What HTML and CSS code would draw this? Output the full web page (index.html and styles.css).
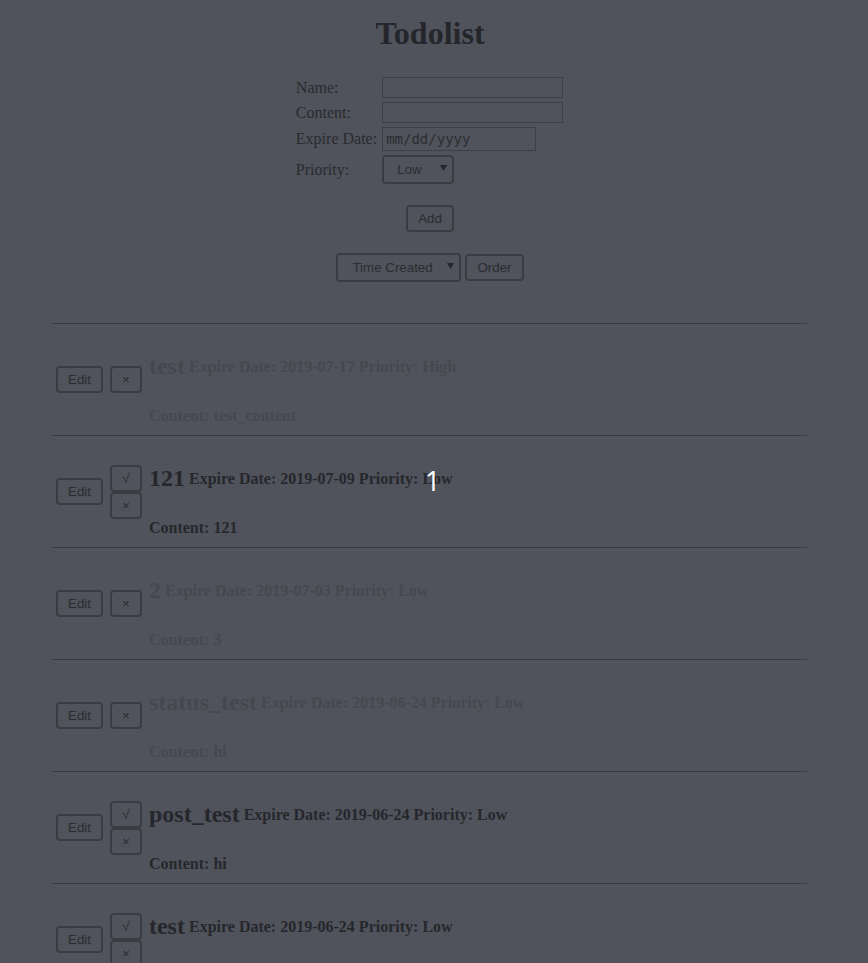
FILE: index.html
```html
<!DOCTYPE html>
<html>
<head>
<meta charset="utf-8">
<title>Todolist</title>
<link rel="stylesheet" href="styles.css">
</head>
<body>
<div class="page">
  <h1 class="title">Todolist</h1>
  <table class="form">
    <tr><td class="label">Name:</td><td><input class="text-input" type="text"></td></tr>
    <tr><td class="label">Content:</td><td><input class="text-input" type="text"></td></tr>
    <tr><td class="label">Expire Date:</td><td><input class="date-input" type="text" placeholder="mm/dd/yyyy"></td></tr>
    <tr><td class="label">Priority:</td><td>
      <span class="select-wrap">
        <select class="select select-priority"><option>Low</option><option>Medium</option><option>High</option></select>
        <svg class="arrow" width="7" height="6" viewBox="0 0 7 6"><path d="M0 0H7L3.5 6Z"/></svg>
      </span>
    </td></tr>
  </table>
  <div class="add-row"><button class="btn">Add</button></div>
  <div class="sort-row">
    <span class="select-wrap">
      <select class="select select-sort"><option>Time Created</option><option>Expire Date</option><option>Priority</option></select>
      <svg class="arrow" width="7" height="6" viewBox="0 0 7 6"><path d="M0 0H7L3.5 6Z"/></svg>
    </span>
    <button class="btn">Order</button>
  </div>

  <div class="list">
    <div class="item done">
      <button class="btn">Edit</button>
      <div class="stack"><button class="btn btn-sq">×</button></div>
      <div class="info">
        <div class="head"><span class="name">test</span> <span class="meta">Expire Date: 2019-07-17 Priority: High</span></div>
        <p class="content">Content: test_content</p>
      </div>
    </div>
    <div class="item">
      <button class="btn">Edit</button>
      <div class="stack"><button class="btn btn-sq">√</button><button class="btn btn-sq">×</button></div>
      <div class="info">
        <div class="head"><span class="name">121</span> <span class="meta">Expire Date: 2019-07-09 Priority: Low</span></div>
        <p class="content">Content: 121</p>
      </div>
    </div>
    <div class="item done">
      <button class="btn">Edit</button>
      <div class="stack"><button class="btn btn-sq">×</button></div>
      <div class="info">
        <div class="head"><span class="name">2</span> <span class="meta">Expire Date: 2019-07-03 Priority: Low</span></div>
        <p class="content">Content: 3</p>
      </div>
    </div>
    <div class="item done">
      <button class="btn">Edit</button>
      <div class="stack"><button class="btn btn-sq">×</button></div>
      <div class="info">
        <div class="head"><span class="name">status_test</span> <span class="meta">Expire Date: 2019-06-24 Priority: Low</span></div>
        <p class="content">Content: hi</p>
      </div>
    </div>
    <div class="item">
      <button class="btn">Edit</button>
      <div class="stack"><button class="btn btn-sq">√</button><button class="btn btn-sq">×</button></div>
      <div class="info">
        <div class="head"><span class="name">post_test</span> <span class="meta">Expire Date: 2019-06-24 Priority: Low</span></div>
        <p class="content">Content: hi</p>
      </div>
    </div>
    <div class="item">
      <button class="btn">Edit</button>
      <div class="stack"><button class="btn btn-sq">√</button><button class="btn btn-sq">×</button></div>
      <div class="info">
        <div class="head"><span class="name">test</span> <span class="meta">Expire Date: 2019-06-24 Priority: Low</span></div>
        <p class="content">Content: hi</p>
      </div>
    </div>
  </div>
</div>
<span class="marker">1</span>
</body>
</html>
```

FILE: styles.css
```css
html {
  background: #50535b;
}
body {
  margin: 0;
  overflow: hidden;
  background: #50535b;
  color: #26272c;
  font-family: "Liberation Serif", "Times New Roman", serif;
  font-size: 16px;
}
.page {
  width: 844px;
  margin-left: 8px;
  padding-top: 15px;
}
.title {
  margin: 0;
  text-align: center;
  font-size: 32px;
  font-weight: bold;
  color: #25262b;
}
.form {
  margin: 22px auto 0;
  border-spacing: 2px;
}
.form td {
  padding: 1px;
  vertical-align: middle;
}
.form td.label {
  padding: 1px 2px 1px 0;
  color: #2a2b30;
  white-space: nowrap;
}
.text-input {
  display: block;
  box-sizing: border-box;
  width: 181px;
  height: 21px;
  margin: 0;
  border: 1px solid #3c3e45;
  background: transparent;
  padding: 1px 2px;
}
.date-input {
  display: block;
  box-sizing: border-box;
  width: 154px;
  height: 24px;
  margin: 0;
  border: 1px solid #3c3e45;
  background: transparent;
  padding: 0 3px;
  font-family: "DejaVu Sans Mono", "Liberation Mono", monospace;
  font-size: 14px;
  color: #2c2d32;
}
.date-input::placeholder {
  color: #2c2d32;
  opacity: 1;
}
.select-wrap {
  position: relative;
  display: inline-flex;
}
.select {
  -webkit-appearance: none;
  appearance: none;
  box-sizing: border-box;
  height: 29px;
  margin: 0;
  border: 2px solid #3a3c42;
  border-radius: 4px;
  background: transparent;
  color: #2c2d32;
  font-family: "Liberation Sans", Arial, sans-serif;
  font-size: 13.333px;
  padding: 0 20px 0 13px;
}
.select-priority {
  width: 72px;
}
.select-sort {
  width: 125px;
  padding-left: 14px;
}
.arrow {
  position: absolute;
  right: 7px;
  top: 10px;
  fill: #25262b;
  pointer-events: none;
}
.btn {
  box-sizing: border-box;
  height: 27px;
  min-width: 32px;
  margin: 0;
  padding: 0 10px;
  border: 2px solid #3a3c42;
  border-radius: 4px;
  background: transparent;
  color: #2a2b30;
  font-family: "Liberation Sans", Arial, sans-serif;
  font-size: 13.333px;
}
.add-row {
  display: flex;
  justify-content: center;
  margin-top: 18px;
}
.sort-row {
  display: flex;
  justify-content: center;
  align-items: center;
  gap: 4px;
  margin-top: 21px;
}
.list {
  margin: 41px 45px 0 44px;
  border-top: 1px solid #3a3c42;
}
.item {
  display: flex;
  align-items: center;
  gap: 7px;
  padding-left: 4px;
  border-bottom: 1px solid #3a3c42;
}
.stack {
  display: flex;
  flex-direction: column;
}
.info {
  padding: 29px 0 10px;
  font-weight: bold;
}
.head {
  white-space: nowrap;
}
.name {
  font-size: 24px;
}
.meta {
  font-size: 16px;
  vertical-align: 2px;
}
.content {
  margin: 27px 0 0;
  font-size: 16px;
}
.done .info {
  color: #46484f;
}
.marker {
  position: absolute;
  left: 425px;
  top: 467px;
  color: #ffffff;
  font-family: "Open Sans", "Liberation Sans", sans-serif;
  font-size: 27px;
  line-height: 1;
}
```
